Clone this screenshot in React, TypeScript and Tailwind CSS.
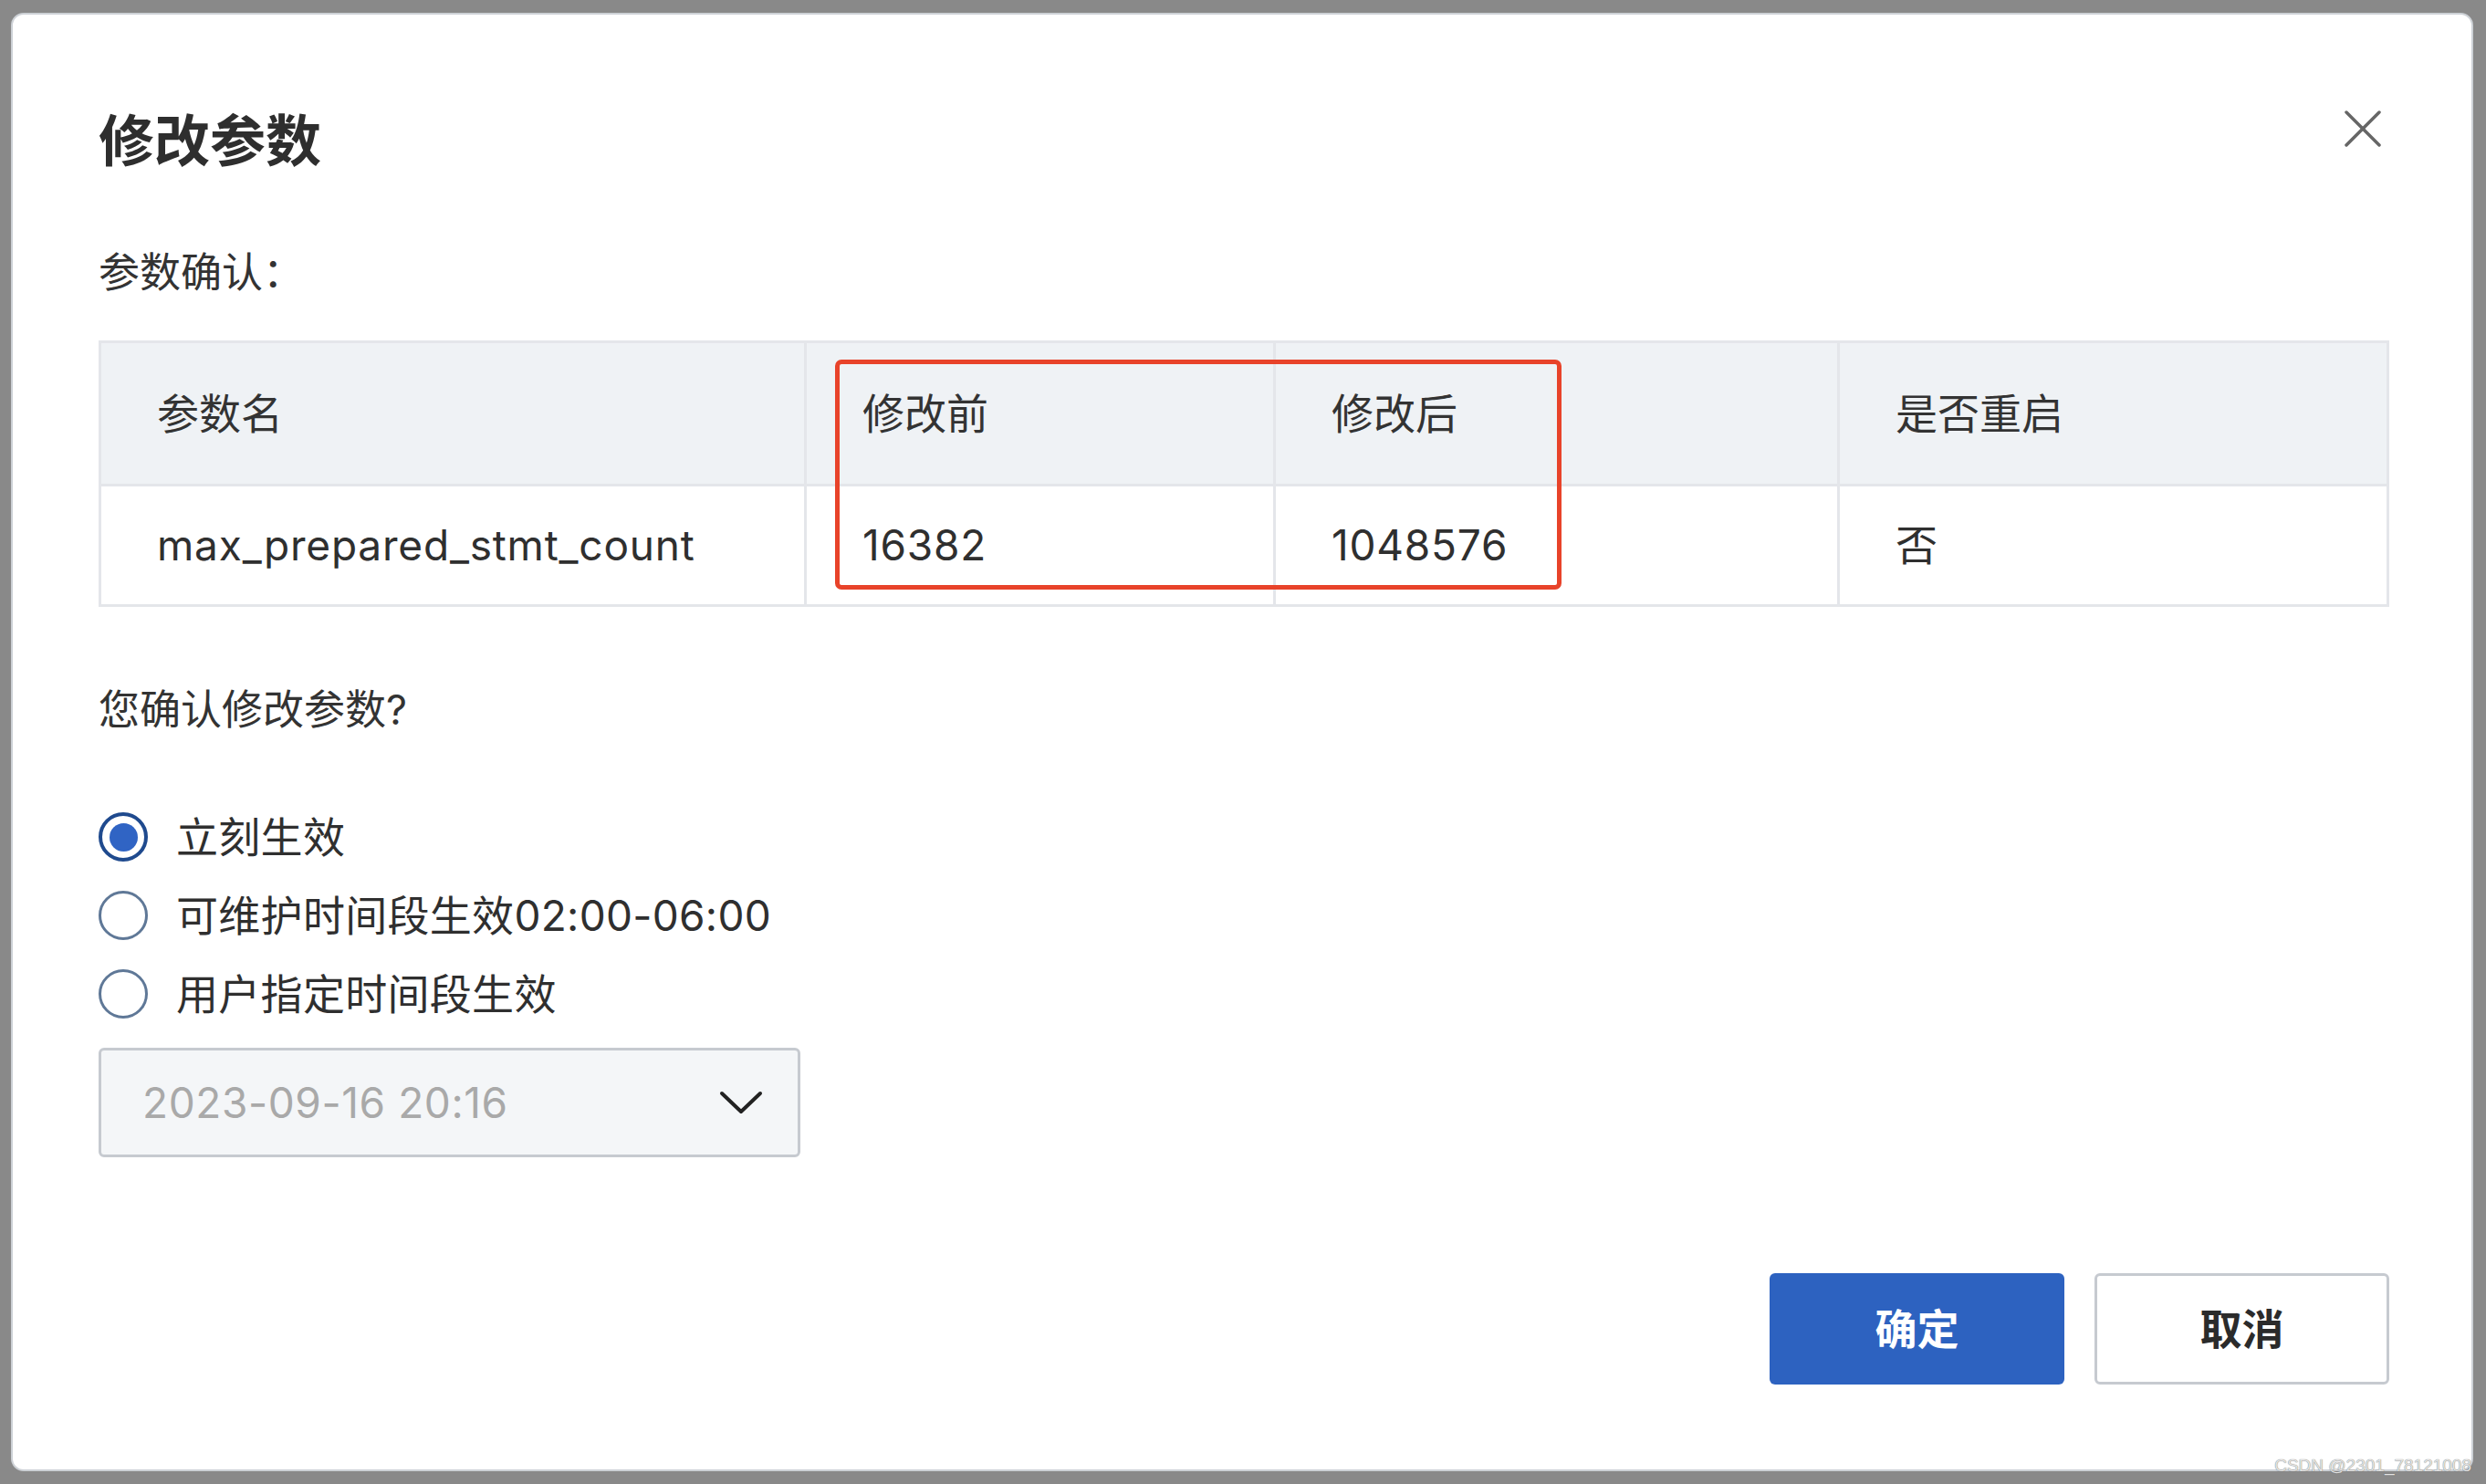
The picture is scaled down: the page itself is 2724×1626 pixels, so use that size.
import React from 'react';

const font = { fontFamily: 'Inter, "Noto Sans CJK SC", sans-serif' };

function Radio({ checked, label }: { checked?: boolean; label: string }) {
  return (
    <div className="flex h-[86px] items-center gap-[31px]">
      {checked ? (
        <span className="flex h-[54px] w-[54px] items-center justify-center rounded-full border-[4px] border-[#1f4a8e]">
          <span className="h-[31px] w-[31px] rounded-full bg-[#3064c4]" />
        </span>
      ) : (
        <span className="h-[54px] w-[54px] rounded-full border-[3px] border-[#5f7897]" />
      )}
      <span className="text-[46px] leading-none tracking-[0.3px] text-[#2f2f2f]">{label}</span>
    </div>
  );
}

export default function App() {
  const headers = ['参数名', '修改前', '修改后', '是否重启'];
  const values = ['max_prepared_stmt_count', '16382', '1048576', '否'];

  return (
    <div className="relative h-[1626px] w-[2724px] overflow-hidden bg-[#898989] pl-[12px] pt-[14px]" style={font}>
      <div className="h-[1598px] w-[2698px] rounded-[14px] border-2 border-[#cdd1d6] bg-white pl-[94px] pr-[90px] pt-[108px]">
        {/* Title */}
        <div className="flex h-[62px] items-start justify-between">
          <h1 className="text-[61px] font-bold leading-[62px] text-[#2e2e2e]">修改参数</h1>
          <svg className="-mt-[3px] mr-[9px]" width="40" height="40" viewBox="0 0 40 40">
            <line x1="2" y1="2" x2="38" y2="38" stroke="#666" strokeWidth="3.5" strokeLinecap="round" />
            <line x1="38" y1="2" x2="2" y2="38" stroke="#666" strokeWidth="3.5" strokeLinecap="round" />
          </svg>
        </div>

        <div className="mt-[90px] flex h-[46px] items-center text-[45px] text-[#333]">参数确认：</div>

        {/* Table */}
        <div className="relative mt-[51px] w-[2510px] border-[3px] border-[#e4e6ea]">
          <div className="grid grid-cols-[770px_514px_618px_602px] border-b-[3px] border-[#e4e6ea] bg-[#eff2f5]">
            {headers.map((h, i) => (
              <div
                key={h}
                className={`flex h-[154px] items-center pl-[61px] text-[46px] text-[#333] ${i > 0 ? 'border-l-[3px] border-[#e4e6ea]' : ''}`}
              >
                {h}
              </div>
            ))}
          </div>
          <div className="grid grid-cols-[770px_514px_618px_602px]">
            {values.map((v, i) => (
              <div
                key={v}
                className={`flex h-[129px] items-center pl-[61px] text-[46px] tracking-[0.8px] text-[#2f2f2f] ${i > 0 ? 'border-l-[3px] border-[#e4e6ea]' : ''}`}
              >
                {v}
              </div>
            ))}
          </div>
          <div className="absolute left-[804px] top-[18px] h-[252px] w-[796px] rounded-[7px] border-[5px] border-[#e8432a]" />
        </div>

        <div className="mt-[83px] flex h-[60px] items-center text-[45px] text-[#333]">您确认修改参数?</div>

        {/* Options */}
        <div className="mt-[66px]">
          <Radio checked label="立刻生效" />
          <Radio label="可维护时间段生效02:00-06:00" />
          <Radio label="用户指定时间段生效" />
        </div>

        <div className="mt-[16px] flex h-[120px] w-[769px] items-center justify-between rounded-[6px] border-[3px] border-[#c6cad0] bg-[#f4f6f8] pl-[45px] pr-[38px]">
          <span className="text-[46px] tracking-[0.6px] text-[#a9a9a9]">2023-09-16 20:16</span>
          <svg width="48" height="28" viewBox="0 0 48 28">
            <polyline points="3,4 24,24 45,4" fill="none" stroke="#222" strokeWidth="4" strokeLinecap="round" strokeLinejoin="round" />
          </svg>
        </div>

        {/* Actions */}
        <div className="mt-[127px] flex justify-end gap-[33px]">
          <button className="h-[122px] w-[323px] rounded-[6px] bg-[#2d62c0] text-[46px] font-bold text-white">确定</button>
          <button className="h-[122px] w-[323px] rounded-[6px] border-[3px] border-[#c6cad0] bg-white text-[46px] font-bold text-[#2b2b2b]">取消</button>
        </div>
      </div>

      <div
        className="absolute right-[16px] top-[1596px] whitespace-nowrap text-[19px] leading-none text-[#e2e2e2] [text-shadow:0_0_1px_#555]"
        style={{ fontFamily: '"Liberation Sans", sans-serif' }}
      >
        CSDN @2301_78121008
      </div>
    </div>
  );
}
